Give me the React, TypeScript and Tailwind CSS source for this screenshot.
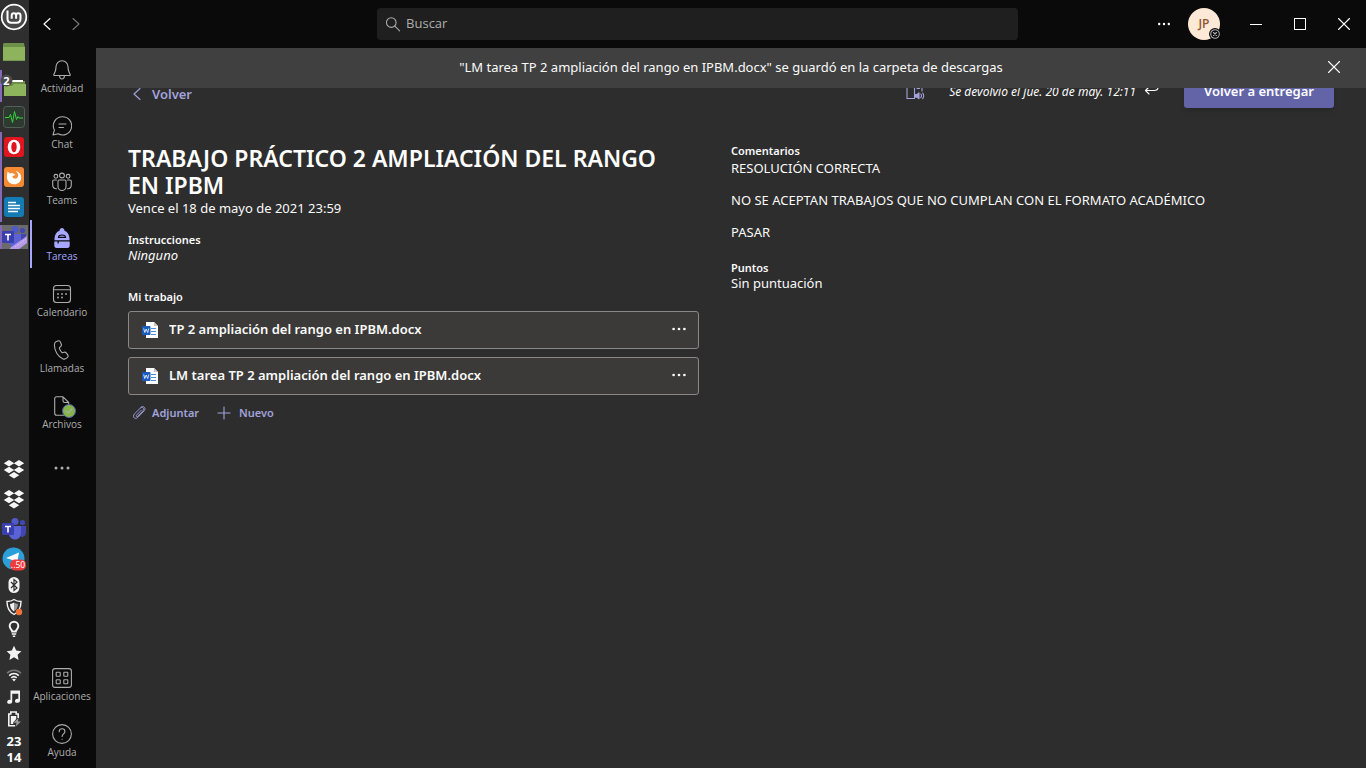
import React from "react";

type IconProps = { children: React.ReactNode; className?: string; box?: string };

function Line({ children, className = "size-5", box = "0 0 20 20" }: IconProps) {
  return (
    <svg viewBox={box} className={className} fill="none" stroke="currentColor" strokeWidth="1.1" strokeLinecap="round" strokeLinejoin="round" aria-hidden="true">
      {children}
    </svg>
  );
}

const Bell = () => (
  <Line>
    <path d="M10 .8C6.400.8 4 3.400 4 6.800c0 2-.3 3.700-1 5.200L1.800 14.600c-.2.500.1.900.6.900h15.200c.5 0 .8-.4.6-.9L17 12c-.7-1.500-1-3.200-1-5.200C16 3.400 13.600.8 10 .8zM7.500 15.700c.2 2 1.200 3.300 2.500 3.300s2.300-1.300 2.500-3.300" />
  </Line>
);
const Chat = () => (
  <Line>
    <path d="M10.500.7a9.100 9.100 0 1 1-4.300 17.100L1 19l1.400-4.900A9.100 9.100 0 0 1 10.500.7zM7 8h7M7 11.500h4.500" />
  </Line>
);
const Teams = () => (
  <Line>
    <circle cx="10" cy="3.500" r="2.400" />
    <circle cx="3.900" cy="4.300" r="1.900" />
    <circle cx="16.100" cy="4.300" r="1.900" />
    <path d="M7.200 8h5.600c.7 0 1.200.5 1.200 1.200v5.300a4 4 0 0 1-8 0V9.200C6 8.500 6.500 8 7.200 8zM4.500 8H1.900C1.200 8 .7 8.500.7 9.200v3.600c0 2.300 1.500 4 3.800 4M15.500 8h2.600c.7 0 1.200.5 1.200 1.200v3.600c0 2.300-1.500 4-3.800 4" />
  </Line>
);
const Backpack = () => (
  <svg viewBox="0 0 20 20" className="size-5" aria-hidden="true">
    <path fill="currentColor" d="M7.500 2.700C7.600 1 8.600 0 10 0s2.400 1 2.500 2.700c3 1 4.700 3.800 5 7.800v1.700h-15v-1.700c.3-4 2-6.800 5-7.800zM2.300 13.400h3.200v2h1.300v-2h10.900v4.400c0 1.200-.8 2.200-2.200 2.200h-11c-1.400 0-2.200-1-2.200-2.200z" />
    <path d="M6.500 9.400c0-1.700 1.400-2.400 3.500-2.400s3.500.7 3.500 2.400z" fill="none" stroke="#0a0a0a" strokeWidth="1.200" />
  </svg>
);
const Calendar = () => (
  <Line>
    <rect x="1.500" y="1.500" width="17" height="17" rx="3" />
    <path d="M1.500 5.700h17" />
    <path strokeWidth="1.800" d="M6 10h.01M10 10h.01M14 10h.01M6 13.500h.01M10 13.500h.01" />
  </Line>
);
const Phone = () => (
  <Line>
    <path d="M4.200 1.500 6 .9c1-.3 1.900.1 2.300 1l1 2.300c.3.800.1 1.600-.5 2.100L7.300 7.800c0 1.200 1.900 4.400 2.900 5l2-.6c.8-.2 1.500 0 2 .6l1.500 2c.6.8.5 1.700-.1 2.400l-1 1c-1 .9-2.300 1.200-3.600.7-5.200-2-8.600-8.200-8.600-13.900 0-1.700.6-3 1.800-3.500z" />
  </Line>
);
const Files = () => (
  <Line>
    <path d="M4.700.8h6.300l5.700 5.700v10.700c0 1.100-.9 2-2 2h-10c-1.100 0-2-.9-2-2V2.800c0-1.100.9-2 2-2zM11 .8v4c0 1 .7 1.700 1.700 1.700h4" />
  </Line>
);
const Apps = () => (
  <Line>
    <rect x=".6" y=".6" width="18.800" height="18.800" rx="2.500" />
    <rect x="4.200" y="4.200" width="4" height="4" rx=".5" />
    <rect x="11.800" y="4.200" width="4" height="4" rx=".5" />
    <rect x="4.200" y="11.800" width="4" height="4" rx=".5" />
    <rect x="11.800" y="11.800" width="4" height="4" rx=".5" />
  </Line>
);
const Help = () => (
  <Line>
    <circle cx="10" cy="10" r="9.400" />
    <path d="M7.200 7.700c0-1.700 1.200-2.900 2.900-2.900s2.800 1.100 2.800 2.700c0 2.300-2.800 2.500-2.800 5M10.100 15.200h.01" />
  </Line>
);
const Dots = ({ className = "size-5" }: { className?: string }) => (
  <svg viewBox="0 0 20 20" className={className} fill="currentColor" aria-hidden="true">
    <circle cx="4" cy="10" r="1.500" />
    <circle cx="10" cy="10" r="1.500" />
    <circle cx="16" cy="10" r="1.500" />
  </svg>
);
const Cross = ({ className = "size-3" }: { className?: string }) => (
  <Line className={className} box="0 0 12 12">
    <path d="M.500.500l11 11M11.500.500l-11 11" />
  </Line>
);
const Chevron = ({ flip = false }: { flip?: boolean }) => (
  <Line className="h-3 w-2" box="0 0 8 12">
    <path d={flip ? "M1 .5 7 6l-6 5.500" : "M7 .5 1 6l6 5.500"} />
  </Line>
);

/* Desktop panel icons */

const Mint = () => (
  <svg viewBox="0 0 28 28" className="size-7" fill="none" aria-hidden="true">
    <circle cx="14" cy="14" r="12.300" fill="#484848" stroke="#fff" strokeWidth="1.700" />
    <path d="M7.500 7.500v8.200c0 2.400 1.600 4 4 4h5c2.400 0 4-1.600 4-4v-3.200c0-1.300-1-2.300-2.200-2.300s-2.200 1-2.200 2.300v3.200M16.100 12.500c0-1.300-1-2.300-2.200-2.300s-2.200 1-2.200 2.300v3.200" stroke="#fff" strokeWidth="2" />
  </svg>
);
const Folder = () => (
  <svg viewBox="0 0 24 20" className="h-5 w-6" aria-hidden="true">
    <path fill="#6d8f47" d="M2 1h20l1 5H1V2z" />
    <path fill="#8db35d" d="M1 5h22v14H1z" />
    <path fill="#769a4c" d="M1 18h22v1H1z" />
  </svg>
);
const OpenFolder = () => (
  <svg viewBox="0 0 28 26" className="h-[26px] w-7" aria-hidden="true">
    <path fill="#6d8f47" d="M4 8h21v5H4z" />
    <path fill="#fff" d="M12 7h11v2H12z" />
    <path fill="#8db35d" d="M4 13h8l2-2h12v12H4z" />
    <circle cx="6.500" cy="7.500" r="6" fill="#4b4b4b" />
    <text x="6.500" y="11.500" textAnchor="middle" fontSize="11" fontWeight="700" fill="#fff">2</text>
  </svg>
);
const Monitor = () => (
  <svg viewBox="0 0 22 22" className="size-[22px]" aria-hidden="true">
    <rect x=".5" y=".5" width="21" height="21" rx="3" fill="#2c3a30" stroke="#555f57" />
    <path d="M2 11.500h4l1.500-3 2 8 2-11 2 8 1.500-3 1 1.500h4" fill="none" stroke="#35d23b" />
  </svg>
);
const Opera = () => (
  <svg viewBox="0 0 22 22" className="size-[22px]" aria-hidden="true">
    <rect x="1" y="1" width="20" height="20" rx="3" fill="#e01520" />
    <ellipse cx="11" cy="11" rx="6.300" ry="7.300" fill="#fff" />
    <ellipse cx="11" cy="11" rx="2.700" ry="5.300" fill="#e01520" />
  </svg>
);
const Firefox = () => (
  <svg viewBox="0 0 22 22" className="size-[22px]" aria-hidden="true">
    <rect x="1" y="1" width="20" height="20" rx="3" fill="#f58a35" />
    <path fill="#fff" d="M4.500 5.500 7 7.500c1-.8 2.400-.8 3.500 0l2 1.500-3 1c-.2 2 2 3.200 4 2.300 1.700-.8 2-2.600 1.500-4-.3-1.300-1.200-2.300-2.500-3.300 3.500.4 5.700 3.300 5.700 6.400 0 4-3.200 6.800-7.200 6.800S4 15.200 4 11.200c0-2 .2-3.900.5-5.700z" />
  </svg>
);
const Writer = () => (
  <svg viewBox="0 0 22 22" className="size-[22px]" aria-hidden="true">
    <rect x="1" y="1" width="20" height="20" rx="3" fill="#147cb4" />
    <path d="M5 6.500h8M5 9.500h12M5 12.500h12M5 15.500h10" stroke="#fff" strokeWidth="1.300" />
  </svg>
);
const TeamsLogo = ({ preview = false }: { preview?: boolean }) => (
  <svg viewBox="0 0 28 24" className="h-6 w-7" aria-hidden="true">
    <circle cx="15" cy="4.500" r="3.600" fill="#5059c9" />
    <circle cx="22.500" cy="5.500" r="2.600" fill="#3f48b5" />
    <path fill="#4048b0" d="M18 9h8v6c0 3-2 5-5 5z" />
    <path fill="#5b62d6" d="M9 9h12v7c0 4-2.600 6.500-6 6.500S9 20 9 16z" />
    <rect x="2" y="6" width="12" height="12" rx="1" fill="#393fae" />
    <path d="M5 9.500h6M8 9.500v6" stroke="#fff" strokeWidth="1.600" />
    {preview && <path fill="#b79be8" d="M10 23 27 11v7l-8 6h-9z" />}
    {preview && <path d="m15 22 11-8" stroke="#dccbf5" strokeDasharray="1 1" />}
  </svg>
);
const Dropbox = () => (
  <svg viewBox="0 0 24 22" className="h-[22px] w-6" fill="#f7f7f7" aria-hidden="true">
    <path d="m7 2 5.200 3.200L7 8.400 1.800 5.200zM17 2l5.200 3.200L17 8.400l-5.200-3.200zM7 8.800l5.200 3.200L7 15.200 1.800 12zM17 8.800l5.200 3.200-5.200 3.200-5.200-3.200zM12 14l5.200 3.200-5.200 3.200-5.200-3.200z" />
  </svg>
);
const Telegram = () => (
  <svg viewBox="0 0 26 26" className="size-[26px]" aria-hidden="true">
    <circle cx="12.500" cy="12.500" r="11" fill="#2b9fd8" />
    <path fill="#fff" d="m5 12 13-5.500-2 11-6-4z" />
    <rect x="9" y="13.500" width="16" height="11" rx="5" fill="#ee3b3b" />
    <text x="17" y="22" textAnchor="middle" fontSize="8.500" fill="#fff">..50</text>
  </svg>
);
const Bluetooth = () => (
  <svg viewBox="0 0 16 18" className="h-[18px] w-4" aria-hidden="true">
    <rect x="2.500" y="1" width="11" height="16" rx="5.500" fill="#f3f3f3" />
    <path d="m5 6 6 6-3 2.500v-11L11 6l-6 6" fill="none" stroke="#2f2f2f" strokeWidth="1.200" />
  </svg>
);
const Shield = () => (
  <svg viewBox="0 0 18 18" className="size-[18px]" aria-hidden="true">
    <path d="M9 1.500c2 1.500 4.500 2 7 2 0 6-1.500 10-7 13-5.500-3-7-7-7-13 2.500 0 5-.5 7-2z" fill="none" stroke="#f3f3f3" strokeWidth="1.400" />
    <path fill="#f3f3f3" d="M9 4.500v9c-2.600-1.700-3.800-4-4-7.500C6.500 5.800 7.800 5.300 9 4.500z" />
    <path fill="#999" d="M9 4.500v9c2.600-1.700 3.800-4 4-7.500-1.500-.2-2.800-.7-4-1.500z" />
    <circle cx="14" cy="14" r="3.200" fill="#f37335" />
  </svg>
);
const Bulb = () => (
  <svg viewBox="0 0 16 18" className="h-[18px] w-4" fill="none" stroke="#f3f3f3" aria-hidden="true">
    <path strokeWidth="2" d="M6.200 11.500c0-1.600-2.500-2.500-2.500-5.500a4.300 4.300 0 0 1 8.600 0c0 3-2.500 3.900-2.500 5.500z" />
    <path strokeWidth="1.500" d="M5.800 14h4.400M6.800 16.200h2.400" />
  </svg>
);
const Star = () => (
  <svg viewBox="0 0 16 16" className="size-4" fill="#f3f3f3" aria-hidden="true">
    <path d="m8 .8 2.200 4.800 5.200.6-3.800 3.500 1 5.200L8 12.300l-4.600 2.600 1-5.200L.6 6.200l5.200-.6z" />
  </svg>
);
const Wifi = () => (
  <svg viewBox="0 0 16 16" className="size-4" fill="none" strokeWidth="1.600" aria-hidden="true">
    <path stroke="#777" d="M1 6.200c4-4 10-4 14 0" />
    <path stroke="#f3f3f3" d="M3.200 8.600c2.800-2.700 6.800-2.700 9.600 0M5.300 10.900c1.600-1.500 3.800-1.500 5.400 0" />
    <path fill="#f3f3f3" d="m8 14.500-1.900-2.200c1.100-.9 2.700-.9 3.800 0z" />
  </svg>
);
const Music = () => (
  <svg viewBox="0 0 16 16" className="size-4" aria-hidden="true">
    <path fill="#f3f3f3" d="M4.500 1.500H14v10.200a2.500 2 0 1 1-1.700-1.800V4.800H6.200v7.900a2.500 2 0 1 1-1.700-1.800z" />
  </svg>
);
const Battery = () => (
  <svg viewBox="0 0 16 16" className="size-4" aria-hidden="true">
    <path d="M9 14.800H2.800V3h2V1h5.400v2h2v4" fill="none" stroke="#f3f3f3" strokeWidth="1.600" />
    <path fill="#f3f3f3" d="M4.800 5h5.400v3l-3 3.500V13H4.800z" />
    <path fill="#999" d="m12.500 7-5 4.700h3l-1 4 5.500-5.200h-3z" />
  </svg>
);

const WordIcon = () => (
  <svg viewBox="0 0 18 18" className="size-[18px] shrink-0" aria-hidden="true">
    <path fill="#fff" d="M5 1h8l4 4v12H5z" />
    <path fill="#c8c6c4" d="M13 1l4 4h-4z" />
    <path d="M10 7.500h5M10 10.500h5M10 13.500h5" stroke="#4a90dd" />
    <rect x="1" y="5" width="8.500" height="9" rx="1" fill="#185abd" />
    <path d="m2.700 7.500 1.100 4L5.200 8l1.500 3.500 1.100-4" fill="none" stroke="#fff" strokeWidth=".8" />
  </svg>
);

function DockItem({ label, open = false, active = false, className = "h-[30px]", children }: { label: string; open?: boolean; active?: boolean; className?: string; children: React.ReactNode }) {
  return (
    <button
      type="button"
      aria-label={label}
      className={`flex w-full items-center justify-center ${className} ${active ? "border-y-3 border-[#2f2f2f] bg-[#6b6b6b]" : ""} ${open ? "shadow-[inset_2px_0_0_#8568b8]" : ""}`}
    >
      {children}
    </button>
  );
}

function Dock() {
  return (
    <aside className="flex w-[29px] shrink-0 flex-col bg-[#2f2f2f] pr-px pb-0.5 font-['Noto_Sans',sans-serif]">
      <DockItem label="Menú" className="h-[34px]"><Mint /></DockItem>
      <DockItem label="Archivos" className="h-9"><Folder /></DockItem>
      <DockItem label="Carpetas abiertas" open className="h-8"><OpenFolder /></DockItem>
      <DockItem label="Monitor del sistema"><Monitor /></DockItem>
      <DockItem label="Opera" open><Opera /></DockItem>
      <DockItem label="Firefox" open><Firefox /></DockItem>
      <DockItem label="Writer" open><Writer /></DockItem>
      <DockItem label="Microsoft Teams" open active><TeamsLogo preview /></DockItem>
      <div className="mt-auto">
        <DockItem label="Dropbox"><Dropbox /></DockItem>
        <DockItem label="Dropbox personal"><Dropbox /></DockItem>
        <DockItem label="Teams"><TeamsLogo /></DockItem>
        <DockItem label="Telegram"><Telegram /></DockItem>
      </div>
      <div>
        <DockItem label="Bluetooth" className="h-[22px]"><Bluetooth /></DockItem>
        <DockItem label="Actualizaciones" className="h-[22px]"><Shield /></DockItem>
        <DockItem label="Luz" className="h-[22px]"><Bulb /></DockItem>
      </div>
      <div className="pt-0.5">
        <DockItem label="Favoritos" className="h-[22px]"><Star /></DockItem>
        <DockItem label="Red" className="h-[22px]"><Wifi /></DockItem>
        <DockItem label="Sonido" className="h-[22px]"><Music /></DockItem>
        <DockItem label="Batería" className="h-[22px]"><Battery /></DockItem>
      </div>
      <time className="flex flex-col items-center pt-[3px] pb-px text-[13px] leading-4 font-bold text-white">
        <span>23</span>
        <span>14</span>
      </time>
    </aside>
  );
}

function RailItem({ label, active = false, badge = false, children }: { label: string; active?: boolean; badge?: boolean; children: React.ReactNode }) {
  return (
    <a
      href="#"
      className={`flex h-12 flex-col items-center border-l-2 pt-2 pr-1 text-[10px] ${active ? "border-[#a6a7ff] text-[#a6a7ff]" : "border-transparent text-[#adadad]"}`}
    >
      <span className="relative">
        {children}
        {badge && (
          <span className="absolute top-2 left-2.5 flex size-3.5 items-center justify-center rounded-full border border-[#5558af] bg-[#85b549]">
            <Line className="size-2.5" box="0 0 10 10"><path d="m2 5 2 2 4-4" /></Line>
          </span>
        )}
      </span>
      <span className="leading-4">{label}</span>
    </a>
  );
}

function Rail() {
  return (
    <nav className="flex w-[67px] shrink-0 flex-col gap-2 bg-[#0a0a0a] py-1 pl-px">
      <RailItem label="Actividad"><Bell /></RailItem>
      <RailItem label="Chat"><Chat /></RailItem>
      <RailItem label="Teams"><Teams /></RailItem>
      <RailItem label="Tareas" active><Backpack /></RailItem>
      <RailItem label="Calendario"><Calendar /></RailItem>
      <RailItem label="Llamadas"><Phone /></RailItem>
      <RailItem label="Archivos" badge><Files /></RailItem>
      <button type="button" aria-label="Más" className="flex h-12 items-center justify-center pr-0.5 text-[#adadad]"><Dots /></button>
      <div className="mt-auto flex flex-col gap-2">
        <RailItem label="Aplicaciones"><Apps /></RailItem>
        <RailItem label="Ayuda"><Help /></RailItem>
      </div>
    </nav>
  );
}

function TitleBar() {
  return (
    <header className="flex h-12 shrink-0 items-center bg-[#0a0a0a] text-white">
      <div className="flex flex-1 gap-[9px]">
        <button type="button" aria-label="Atrás" className="ml-2 flex size-5 items-center justify-center"><Chevron /></button>
        <button type="button" aria-label="Adelante" className="flex size-5 items-center justify-center text-[#777]"><Chevron flip /></button>
      </div>
      <label className="flex h-8 w-[48%] items-center gap-1.5 rounded bg-[#1f1f1f] px-2 text-[#adadad]">
        <Line className="size-4" box="0 0 16 16"><circle cx="6.500" cy="6.500" r="5" /><path d="m10.200 10.200 5 5" /></Line>
        <input aria-label="Buscar" placeholder="Buscar" className="w-full bg-transparent text-[13px] outline-none placeholder:text-[#adadad]" />
      </label>
      <div className="flex flex-1 items-center justify-end">
        <button type="button" aria-label="Configuración y más" className="mr-4 flex size-4 items-center justify-center"><Dots className="size-4" /></button>
        <button type="button" className="relative mr-3.5 size-8 rounded-full bg-[#fde9d5] text-xs font-semibold text-[#8e562e]">
          JP
          <span className="absolute -right-px bottom-0 flex size-3 items-center justify-center rounded-full bg-[#0a0a0a] text-[#adadad]">
            <Line className="size-2.5" box="0 0 10 10"><circle cx="5" cy="5" r="4.300" /><path d="m3.500 3.500 3 3M6.500 3.500l-3 3" /></Line>
          </span>
        </button>
        <button type="button" aria-label="Minimizar" className="flex h-12 w-11 items-center justify-center"><span className="h-px w-3 bg-white" /></button>
        <button type="button" aria-label="Maximizar" className="flex h-12 w-11 items-center justify-center"><span className="size-3 border border-white" /></button>
        <button type="button" aria-label="Cerrar" className="flex h-12 w-11 items-center justify-center"><Cross /></button>
      </div>
    </header>
  );
}

function FileRow({ name }: { name: string }) {
  return (
    <li className="flex h-[38px] items-center rounded-[3px] border border-[#8a8886] bg-[#3b3a39] pr-2.5 pl-3">
      <a href="#" className="flex min-w-0 flex-1 items-center gap-2.5 text-[13px] font-semibold">
        <WordIcon />
        <span className="truncate">{name}</span>
      </a>
      <button type="button" aria-label={`Más opciones de ${name}`} className="pb-0.5"><Dots className="size-[18px]" /></button>
    </li>
  );
}

function Assignment() {
  return (
    <main className="relative min-w-0 flex-1 bg-[#2d2d2d] px-8 pt-7 font-['Noto_Sans',sans-serif] text-[#fafafa]">
      <div role="status" className="absolute inset-x-0 top-0 z-10 flex h-10 items-center bg-[#404040] pr-6 pl-10 text-[13px]">
        <p className="flex-1 text-center">"LM tarea TP 2 ampliación del rango en IPBM.docx" se guardó en la carpeta de descargas</p>
        <button type="button" aria-label="Cerrar aviso" className="flex size-4 items-center justify-center pb-0.5"><Cross /></button>
      </div>

      <div className="flex h-8 items-center">
        <a href="#" className="flex items-center gap-[11px] pt-1 pl-[5px] text-[13px] leading-5 font-semibold text-[#a2a3dc]">
          <Chevron />
          Volver
        </a>
        <button type="button" aria-label="Lector inmersivo" className="mr-6 ml-auto text-[#a2a3dc]">
          <Line className="size-5" box="0 0 20 20">
            <path d="M9.500 16.500H2v-13h5.500c1.200 0 2 .8 2 2v11zM9.500 5.500c0-1.200.8-2 2-2H17V9M12 6.500h2.500" />
            <path fill="currentColor" d="M10.500 12.500h1.500l2-1.700v6l-2-1.700h-1.500z" />
            <path d="M15.800 12c.8 1 .8 2.700 0 3.700M17.700 11c1.200 1.700 1.200 4 0 5.700" />
          </Line>
        </button>
        <p className="text-xs leading-5 italic">Se devolvió el jue. 20 de may. 12:11</p>
        <Line className="mr-6 ml-2 size-4" box="0 0 16 16"><path d="M5 3 1.500 6.500 5 10M1.500 6.500H10c2.500 0 4-1.200 4-3" /></Line>
        <button type="button" className="h-8 rounded-[3px] bg-[#6264a7] px-5 text-[13px] font-semibold text-white shadow-md">Volver a entregar</button>
      </div>

      <div className="grid grid-cols-2 pt-[35px]">
        <section className="pt-0.5 pr-8">
          <h1 className="pr-4 text-[23px] leading-[27px] font-semibold text-white">TRABAJO PRÁCTICO 2 AMPLIACIÓN DEL RANGO EN IPBM</h1>
          <p className="pt-px text-[13px] leading-4">Vence el 18 de mayo de 2021 23:59</p>
          <h2 className="pt-4 text-[11px] leading-4 font-semibold">Instrucciones</h2>
          <p className="text-[13px] leading-3.5 italic">Ninguno</p>
          <h2 className="pt-[27px] text-[11px] leading-4 font-semibold">Mi trabajo</h2>
          <ul className="flex flex-col gap-2 pt-1.5">
            <FileRow name="TP 2 ampliación del rango en IPBM.docx" />
            <FileRow name="LM tarea TP 2 ampliación del rango en IPBM.docx" />
          </ul>
          <div className="flex gap-[18px] pt-2.5 pl-1 text-[11px] leading-4 font-semibold text-[#a2a3dc]">
            <button type="button" className="flex items-center gap-1.5">
              <Line className="size-3.5" box="0 0 14 14"><path strokeWidth=".9" d="m9.500 4-5 5.200c-.9.900.3 2 1.100 1.200l5.500-5.700c1.800-1.900-.8-4.500-2.700-2.700L2.500 7.900C-.2 10.700 3 14 5.700 11.500l6.500-6.700c2.400-2.700-1-5.800-3.500-3.500" /></Line>
              Adjuntar
            </button>
            <button type="button" className="flex items-center gap-2">
              <Line className="size-3.5" box="0 0 14 14"><path d="M7 1v12M1 7h12" /></Line>
              Nuevo
            </button>
          </div>
        </section>

        <section>
          <h2 className="text-[11px] leading-4 font-semibold">Comentarios</h2>
          <p className="pt-px text-[13px] leading-4 whitespace-pre-line">{"RESOLUCIÓN CORRECTA\n\nNO SE ACEPTAN TRABAJOS QUE NO CUMPLAN CON EL FORMATO ACADÉMICO\n\nPASAR"}</p>
          <h2 className="pt-5 text-[11px] leading-4 font-semibold">Puntos</h2>
          <p className="text-[13px] leading-3.5">Sin puntuación</p>
        </section>
      </div>
    </main>
  );
}

export default function App() {
  return (
    <div className="flex min-h-screen font-['Open_Sans',sans-serif]">
      <Dock />
      <div className="flex min-w-0 flex-1 flex-col">
        <TitleBar />
        <div className="flex flex-1">
          <Rail />
          <Assignment />
        </div>
      </div>
    </div>
  );
}
